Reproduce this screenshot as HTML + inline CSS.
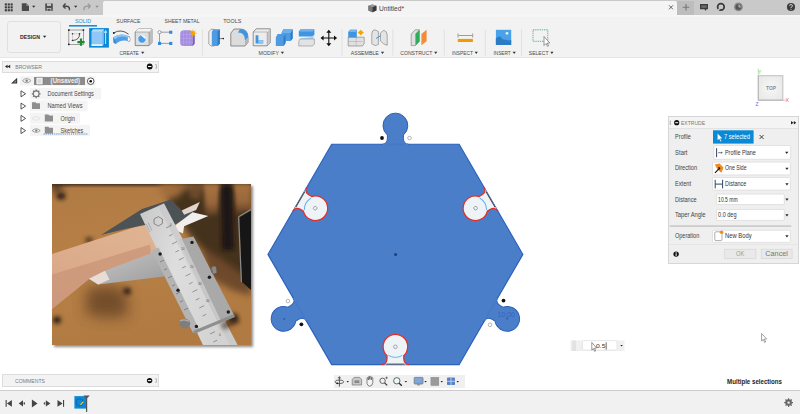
<!DOCTYPE html>
<html><head><meta charset="utf-8">
<style>
*{margin:0;padding:0;box-sizing:border-box}
html,body{width:800px;height:414px;overflow:hidden;background:#fff;font-family:"Liberation Sans",sans-serif}
.a{position:absolute}
#root{position:relative;width:800px;height:414px;overflow:hidden;background:#fff}
.t{position:absolute;white-space:nowrap;line-height:1}
</style></head><body><div id="root">

<!-- top bar -->
<div class="a" style="left:0;top:0;width:800px;height:15px;background:#c9c9c9"></div>
<div class="a" style="left:103px;top:1px;width:574px;height:14px;background:#f4f4f4;border-radius:2px 2px 0 0"></div>
<div class="a" style="left:677px;top:1px;width:17px;height:14px;background:#bdbdbd"></div>
<svg class="a" style="left:0;top:0" width="800" height="15" viewBox="0 0 800 15">
 <g fill="#3a3a3a">
  <rect x="4.8" y="3.4" width="2.1" height="2.1"/><rect x="7.7" y="3.4" width="2.1" height="2.1"/><rect x="10.6" y="3.4" width="2.1" height="2.1"/>
  <rect x="4.8" y="6.3" width="2.1" height="2.1"/><rect x="7.7" y="6.3" width="2.1" height="2.1"/><rect x="10.6" y="6.3" width="2.1" height="2.1"/>
  <rect x="4.8" y="9.2" width="2.1" height="2.1"/><rect x="7.7" y="9.2" width="2.1" height="2.1"/><rect x="10.6" y="9.2" width="2.1" height="2.1"/>
 </g>
 <path d="M21.8,3.2 H26.3 L29,5.9 V11 H21.8 Z" fill="#4a4a4a"/>
 <path d="M26.3,3.2 V5.9 H29 Z" fill="#8a8a8a"/>
 <path d="M32,5.8 H35.4 L33.7,7.8 Z" fill="#333"/>
 <path d="M45.2,3.5 H52.8 V10.8 H45.2 Z" fill="#505050"/>
 <rect x="47" y="3.5" width="4" height="2.4" fill="#c9c9c9"/>
 <rect x="46.8" y="8" width="4.4" height="2.8" fill="#c9c9c9"/>
 <rect x="47.5" y="8.8" width="3" height="2" fill="#505050"/>
 <path d="M63,6.2 L65.6,3.6 M63,6.2 L65.6,8.6 M63,6.2 H66.5 Q69.5,6.2 69.5,9.2 V10.2" stroke="#4a4a4a" stroke-width="1.4" fill="none"/>
 <path d="M74,5.8 H77.4 L75.7,7.8 Z" fill="#333"/>
 <path d="M90.5,6.2 L87.9,3.6 M90.5,6.2 L87.9,8.6 M90.5,6.2 H87 Q84,6.2 84,9.2 V10.2" stroke="#9a9a9a" stroke-width="1.3" fill="none"/>
 <path d="M95.3,5.8 H98.7 L97,7.8 Z" fill="#8a8a8a"/>
 <path d="M368.4,5.8 L372.4,4.4 L376.4,5.8 V10.6 L372.4,12.2 L368.4,10.6 Z" fill="#666"/>
 <path d="M368.4,5.8 L372.4,7.2 L376.4,5.8 L372.4,4.4 Z" fill="#9a9a9a"/>
 <path d="M372.4,7.2 V12.2 L376.4,10.6 V5.8 Z" fill="#3a3a3a"/>
 <path d="M368.4,5.8 L372.4,7.2 V12.2 L368.4,10.6 Z" fill="#7a7a7a"/>
 <path d="M669,5.3 L673,9.3 M673,5.3 L669,9.3" stroke="#555" stroke-width="0.9"/>
 <path d="M686,4 V10.6 M682.7,7.3 H689.3" stroke="#777" stroke-width="1.1"/>
 <path d="M700,4 H708 V9.2 H706.3 L706,11 L704.3,9.2 H700 Z" fill="#3d3d3d"/>
 <rect x="701.3" y="5.4" width="5.4" height="2.4" fill="#6a6a6a"/>
 <circle cx="720.9" cy="6.9" r="3.3" fill="none" stroke="#3a3a3a" stroke-width="1.7"/>
 <path d="M718,10.2 L721.6,6.4" stroke="#c9c9c9" stroke-width="1.3"/>
 <path d="M720.6,5.4 Q721.4,4.6 722.4,5.8 L721.6,6.6 Z" fill="#c9c9c9"/>
 <circle cx="738.4" cy="6.9" r="4.4" fill="#8a8a8a"/>
 <circle cx="738.4" cy="6.9" r="2.9" fill="#555"/>
 <path d="M738.4,6.9 L738.4,4.6 A2.3,2.3 0 0 1 740.4,8 Z" fill="#b0b0b0"/>
 <circle cx="791" cy="7" r="4.1" fill="#3d3d3d"/>
 <path d="M789.6,5.9 Q789.6,4.5 791,4.5 Q792.5,4.5 792.5,5.9 Q792.5,6.8 791,7.3 V8" stroke="#c9c9c9" stroke-width="1" fill="none"/>
 <circle cx="791" cy="9.3" r="0.6" fill="#c9c9c9"/>
</svg>
<svg class="a" style="left:360px;top:0" width="60" height="15" viewBox="360 0 60 15"><text x="379" y="11" font-size="7.6" fill="#444" font-family="Liberation Sans, sans-serif" textLength="25" lengthAdjust="spacingAndGlyphs">Untitled*</text></svg>

<!-- toolbar -->
<div class="a" style="left:0;top:15px;width:800px;height:43px;background:#f2f2f2;border-bottom:1px solid #e6e6e6"></div>
<div class="a" style="left:0;top:15px;width:800px;height:2px;background:#f6f6f6"></div>
<div class="a" style="left:6.6px;top:20.8px;width:54px;height:31.8px;border:1px solid #e0e0e0;border-radius:3px;background:#f2f2f2"></div>
<svg class="a" style="left:0;top:15px" width="800" height="43" viewBox="0 15 800 43" font-family="Liberation Sans, sans-serif">
 <text x="20" y="38.9" font-size="6.2" font-weight="bold" fill="#2a2a2a" textLength="20" lengthAdjust="spacingAndGlyphs">DESIGN</text>
 <path d="M42.9,35.8 H46.3 L44.6,37.8 Z" fill="#222"/>
 <g font-size="5.8" fill="#4a4a4a">
  <text x="75" y="23" fill="#1b8fd6" textLength="16" lengthAdjust="spacingAndGlyphs">SOLID</text>
  <text x="116.3" y="23.2" textLength="24.1" lengthAdjust="spacingAndGlyphs">SURFACE</text>
  <text x="164.6" y="23.2" textLength="35" lengthAdjust="spacingAndGlyphs">SHEET METAL</text>
  <text x="223.2" y="23.2" textLength="18" lengthAdjust="spacingAndGlyphs">TOOLS</text>
 </g>
 <rect x="69" y="25" width="28" height="1.6" fill="#1b8fd6"/>
 <g font-size="6" fill="#4a4a4a">
  <text x="119.6" y="55" textLength="19.2" lengthAdjust="spacingAndGlyphs">CREATE</text>
  <text x="258.6" y="55" textLength="20.5" lengthAdjust="spacingAndGlyphs">MODIFY</text>
  <text x="350.7" y="55" textLength="28.1" lengthAdjust="spacingAndGlyphs">ASSEMBLE</text>
  <text x="400.2" y="55" textLength="32.2" lengthAdjust="spacingAndGlyphs">CONSTRUCT</text>
  <text x="452" y="55" textLength="20.9" lengthAdjust="spacingAndGlyphs">INSPECT</text>
  <text x="493.4" y="55" textLength="17.4" lengthAdjust="spacingAndGlyphs">INSERT</text>
  <text x="528.8" y="55" textLength="19.7" lengthAdjust="spacingAndGlyphs">SELECT</text>
 </g>
 <g fill="#333">
  <path d="M141.10,51.8 H144.30 L142.70,53.9 Z"/>
  <path d="M280.80,51.8 H284.00 L282.40,53.9 Z"/>
  <path d="M380.90,51.8 H384.10 L382.50,53.9 Z"/>
  <path d="M434.15,51.8 H437.35 L435.75,53.9 Z"/>
  <path d="M474.65,51.8 H477.85 L476.25,53.9 Z"/>
  <path d="M512.60,51.8 H515.80 L514.20,53.9 Z"/>
  <path d="M550.30,51.8 H553.50 L551.90,53.9 Z"/>
 </g>
 <g fill="#dcdcdc">
  <rect x="202" y="29.5" width="0.8" height="26"/>
  <rect x="341.6" y="29.5" width="0.8" height="26"/>
  <rect x="392.5" y="29.5" width="0.8" height="26"/>
  <rect x="443.8" y="29.5" width="0.8" height="26"/>
  <rect x="484.85" y="29.5" width="0.8" height="26"/>
  <rect x="521.1" y="29.5" width="0.8" height="26"/>
 </g>
 <!-- sketch -->
 <g>
  <rect x="68.8" y="30" width="14.6" height="14.4" fill="none" stroke="#8a8a8a" stroke-width="0.8"/>
  <g fill="#222"><rect x="68" y="29.3" width="1.6" height="1.6"/><rect x="82.6" y="29.3" width="1.6" height="1.6"/><rect x="68" y="43.6" width="1.6" height="1.6"/></g>
  <path d="M72.5,40.5 Q79.6,40 79.6,33.8" stroke="#333" stroke-width="0.8" fill="none"/>
  <path d="M72.5,33.8 H79.6 M72.5,33.8 V40.5" stroke="#888" stroke-width="0.6" stroke-dasharray="1 0.8" fill="none"/>
  <g fill="#333"><circle cx="72.5" cy="33.8" r="0.8"/><circle cx="79.6" cy="33.8" r="0.8"/><circle cx="72.5" cy="40.5" r="0.8"/></g>
  <path d="M81,38.6 V45.8 M77.4,42.2 H84.6" stroke="#1b8a2d" stroke-width="2.2"/>
 </g>
 <!-- extrude selected -->
 <rect x="89.1" y="28.1" width="19.8" height="19.5" fill="#0a8ad6"/>
 <path d="M91.5,31.5 L93,29.6 H104 V43.8 L102.4,46 H91.5 Z" fill="#8fc8f7"/>
 <path d="M91.5,31.5 L93,29.6 H104 L102.4,31.5 Z" fill="#b9defb"/>
 <path d="M102.4,31.5 L104,29.6 V43.8 L102.4,46 Z" fill="#6fb2ec"/>
 <path d="M91.5,44.2 H102.4 V46 H91.5 Z" fill="#e8f2fa"/>
 <path d="M105.6,44 V31.5 M104.4,32.8 L105.6,30.5 L106.8,32.8" stroke="#fff" stroke-width="0.8" fill="none"/>
 <!-- revolve -->
 <path d="M113.6,33 Q121,28.4 128.6,34.2" stroke="#444" stroke-width="0.9" fill="none"/>
 <circle cx="113.8" cy="33" r="0.9" fill="#111"/>
 <path d="M113,37.5 Q120.5,31.8 129.5,36.5 L130,41.5 Q121.5,38.5 116,43.8 Z" fill="#4f9fe6"/>
 <path d="M113,37.5 Q120.5,31.8 129.5,36.5 L128,38 Q120.5,34.5 114.6,39.4 Z" fill="#8cc4f2"/>
 <path d="M113,37.5 L114.6,39.4 L116.3,44.2 L113.6,42.8 Z" fill="#2f7fc9"/>
 <ellipse cx="128.8" cy="39.2" rx="1.4" ry="2.4" fill="#fff" stroke="#555" stroke-width="0.4"/>
 <!-- hole -->
 <path d="M135.2,32 L138.2,29 H152 V42.6 L149,45.6 H135.2 Z" fill="#dedede" stroke="#666" stroke-width="0.7"/>
 <path d="M135.2,32 L138.2,29 H152 L149,32 Z" fill="#f4f4f4"/>
 <path d="M149,32 L152,29 V42.6 L149,45.6 Z" fill="#bdbdbd"/>
 <path d="M135.2,32 H149 V45.6" stroke="#777" stroke-width="0.5" fill="none"/>
 <circle cx="142" cy="39" r="4.2" fill="#4c9be3" stroke="#fff" stroke-width="0.7"/>
 <path d="M140.8,35.2 A4,4 0 0 1 145.8,39.6 Z" fill="#fff"/>
 <!-- pattern -->
 <path d="M159.5,32.2 H170.8 M159.5,32.2 V43.4 H170.8" stroke="#888" stroke-width="0.8" fill="none"/>
 <circle cx="159.5" cy="32.2" r="1.6" fill="#fff" stroke="#666" stroke-width="0.6"/>
 <g fill="#2d8ae0"><rect x="169.2" y="30.7" width="3.1" height="3.1"/><rect x="158" y="41.9" width="3.1" height="3.1"/><rect x="169.2" y="41.9" width="3.1" height="3.1"/></g>
 <!-- form -->
 <path d="M180.2,34 Q180.2,30.2 184,30.2 H189 Q192.5,30.2 192.5,33.5 V43.5 Q192.5,46 189.5,46 H183.5 Q180.2,46 180.2,42.5 Z" fill="#a58ce0"/>
 <path d="M189.8,31.5 Q194.8,32 194.8,36.5 V42.5 Q194.8,45.6 191,46 H189.5 Q192.5,46 192.5,43.5 V33.5 Q192.5,31.8 189.8,31.5 Z" fill="#7a5ec4"/>
 <path d="M183.6,30.4 V46 M186.8,30.2 V46 M189.8,30.6 V46 M180.2,34.5 H192.5 M180.2,38.3 H192.5 M180.2,42.1 H192.5" stroke="#c3b2ee" stroke-width="0.4"/>
 <circle cx="192.9" cy="33.2" r="2.2" fill="#f5a300"/>
 <path d="M192.9,29.4 V37 M189.1,33.2 H196.7 M190.2,30.5 L195.6,35.9 M190.2,35.9 L195.6,30.5" stroke="#f5a300" stroke-width="0.7"/>
 <!-- press pull -->
 <path d="M208.8,31.8 L211,29.3 H214.2 V46 H211 L208.8,44 Z" fill="#eee" stroke="#777" stroke-width="0.6"/>
 <path d="M211.8,31.8 L213.6,29.3 H219.8 V43.6 L217.6,46 H211.8 Z" fill="#4c9be3"/>
 <path d="M217.6,31.8 L219.8,29.3 V43.6 L217.6,46 Z" fill="#2f78c4"/>
 <path d="M219.5,38.6 H222.6" stroke="#222" stroke-width="0.6"/>
 <circle cx="223.2" cy="38.6" r="0.8" fill="#111"/>
 <!-- fillet -->
 <path d="M230.8,33.2 L234,29 H240 Q248,29 248,37.5 V42.4 L245,46 H230.8 Z" fill="#dcdcdc" stroke="#666" stroke-width="0.7"/>
 <path d="M240,29 Q248,29 248,37.5 L245,40.5 Q245,32.5 238,32.5 Z" fill="#3f95e0"/>
 <path d="M245,40.5 V46 L248,42.4 V37.5 Z" fill="#b5b5b5"/>
 <!-- shell -->
 <path d="M253.2,32 L256.3,28.8 H270.3 V42.8 L267.2,45.8 H253.2 Z" fill="#ececec" stroke="#666" stroke-width="0.7"/>
 <path d="M267.2,32 L270.3,28.8 V42.8 L267.2,45.8 Z" fill="#c4c4c4"/>
 <path d="M253.2,32 H267.2 V45.8" stroke="#888" stroke-width="0.5" fill="none"/>
 <path d="M255.6,35.3 H258.4 V40.2 H263.2 V43.4 H255.6 Z" fill="#3f95e0"/>
 <path d="M258.4,40.2 H263.2 V43.4 H258.4 Z" fill="#8dc5f3"/>
 <!-- combine -->
 <path d="M281.5,33 L283.3,29.3 H292.6 V38.5 L290.6,41 H281.5 Z" fill="#4c9be3"/>
 <path d="M275.8,37.6 L277.6,34 H285.5 V43 L283.6,46 H275.8 Z" fill="#4c9be3"/>
 <path d="M290.6,33 L292.6,29.3 V38.5 L290.6,41 Z" fill="#2f78c4"/>
 <path d="M283.6,37.6 L285.5,34 V43 L283.6,46 Z" fill="#2f78c4"/>
 <path d="M281.5,33 L283.3,29.3 H292.6 L290.6,33 Z" fill="#6db0ee"/>
 <!-- split body -->
 <path d="M298.8,31.5 L300.5,29.3 H314.4 V34.5 L312.6,36.6 H298.8 Z" fill="#3f95e0"/>
 <path d="M298.8,31.5 L300.5,29.3 H314.4 L312.6,31.5 Z" fill="#71b4ef"/>
 <path d="M298.5,38.8 L314.4,36.4 L313,39 L298.5,39.4 Z" fill="#a8d4f5"/>
 <path d="M298.8,41 L300.5,39 H314.4 V44 L312.6,46 H298.8 Z" fill="#e3e3e3" stroke="#777" stroke-width="0.5"/>
 <!-- move -->
 <path d="M328.8,31 V45 M321.5,38 H336.3" stroke="#111" stroke-width="1.1"/>
 <path d="M328.8,29.8 L326.3,32.8 H331.3 Z M328.8,46.2 L326.3,43.2 H331.3 Z M320.6,38 L323.6,35.5 V40.5 Z M337,38 L334,35.5 V40.5 Z" fill="#111"/>
 <!-- new component -->
 <path d="M348.2,37.2 H364.2 V43.6 L362.4,46 H348.2 Z" fill="#e0e0e0" stroke="#777" stroke-width="0.6"/>
 <path d="M356.2,37.2 V46 M348.2,41.5 H362.4" stroke="#999" stroke-width="0.4"/>
 <path d="M348.2,32 L350,29.8 H356.8 V37.6 H348.2 Z" fill="#3f95e0"/>
 <path d="M348.2,32 L350,29.8 H356.8 L355.5,32 Z" fill="#76b6ef"/>
 <path d="M360.8,29.4 L361.8,31.6 L364.2,32.6 L361.8,33.6 L360.8,35.8 L359.8,33.6 L357.4,32.6 L359.8,31.6 Z" fill="#f5a300"/>
 <circle cx="360.8" cy="32.6" r="2.1" fill="#f5a300"/>
 <!-- joint -->
 <path d="M371.8,33.5 Q372,30 375,29.8 L378.4,31.5 V44.5 L375.2,45.6 L371.8,43.8 Z" fill="#e4e4e4" stroke="#777" stroke-width="0.6"/>
 <path d="M380.4,33 L383.8,30.3 Q387,31 387.2,35 V45.3 L383.6,43.8 L380.4,41 Z" fill="#e4e4e4" stroke="#777" stroke-width="0.6"/>
 <path d="M376,38.5 L381,35.5" stroke="#3f95e0" stroke-width="1"/>
 <!-- construct -->
 <path d="M411.2,34.2 L415.2,29.8 H419.4 V41.6 L415.4,45.6 H411.2 Z" fill="#e0e0e0" stroke="#777" stroke-width="0.6"/>
 <path d="M415,34.2 L419.4,29.8 V41.6 L415.4,45.6 V34.2 Z" fill="#2eae5b"/>
 <path d="M421.4,34 L426.6,29.8 V41.2 L421.4,45.2 Z" fill="#f08c3a"/>
 <!-- measure -->
 <path d="M458,33.5 V37.5 M472.7,33.5 V37.5" stroke="#777" stroke-width="0.7"/>
 <path d="M458.6,35.5 H472.1" stroke="#777" stroke-width="0.7"/>
 <rect x="457.8" y="38.9" width="15.1" height="3.1" fill="#f29a00"/>
 <!-- insert -->
 <rect x="495.9" y="29.8" width="15.3" height="15.1" fill="#4aa3ea"/>
 <path d="M495.9,41 Q498.5,36 501,38 Q503.5,40.5 506,39.5 Q508,41 511.2,40 V44.9 H495.9 Z" fill="#2b7cc4"/>
 <path d="M495.9,38.5 Q499,35 501.5,37.6 L495.9,42 Z" fill="#2b7cc4"/>
 <circle cx="507" cy="33.3" r="1.4" fill="#f5f0c0"/>
 <!-- select -->
 <rect x="533" y="29.8" width="14.8" height="11.5" fill="none" stroke="#39a563" stroke-width="0.8" stroke-dasharray="1.3 0.9"/>
 <path d="M544,36.5 V45.5 L546,43.5 L547.6,46.4 L548.6,45.8 L547.2,43.1 L549.8,43 Z" fill="#fff" stroke="#555" stroke-width="0.6"/>
</svg>

<!-- browser header -->
<div class="a" style="left:2px;top:60.5px;width:156.5px;height:12.5px;background:#f3f3f3;border:1px solid #dddddd"></div>
<svg class="a" style="left:0;top:56px" width="170" height="84" viewBox="0 56 170 84" font-family="Liberation Sans, sans-serif">
 <path d="M5,66.5 L7.6,64.8 V68.2 Z M7.6,66.5 L10.2,64.8 V68.2 Z" fill="#222"/>
 <text x="15.2" y="68.7" font-size="6.2" fill="#7a7a7a" textLength="26.7" lengthAdjust="spacingAndGlyphs">BROWSER</text>
 <circle cx="149.7" cy="66.5" r="2.9" fill="#111"/>
 <rect x="148" y="66" width="3.4" height="1" fill="#fff"/>
 <path d="M155.8,64 Q157.4,66.5 155.8,69" stroke="#aaa" stroke-width="1" fill="none"/>
 <!-- row1 -->
 <rect x="20" y="76.2" width="75.5" height="9.4" fill="#f3f3f3"/>
 <path d="M11,83.5 L17.2,77.7 V83.5 Z" fill="#333"/>
 <path d="M13.5,82.5 L16.2,80 V82.5 Z" fill="#f3f3f3" opacity="0.5"/>
 <path d="M22.4,80.7 Q26.7,76.4 31,80.7 Q26.7,85 22.4,80.7 Z" fill="none" stroke="#999" stroke-width="0.9"/>
 <circle cx="26.7" cy="80.7" r="1.3" fill="#888"/>
 <rect x="34" y="77" width="51" height="8" fill="#8c8c8c"/>
 <path d="M36,78.6 Q36,77.3 37.3,77.3 H42.2 Q43,77.3 43,78.3 V83.8 Q43,84.8 42,84.8 H37.3 Q36,84.8 36,83.5 Z" fill="#f2f2f2" stroke="#666" stroke-width="0.5"/>
 <rect x="37.6" y="78.8" width="3.8" height="4.6" fill="#dcdcdc"/>
 <text x="50.6" y="83.4" font-size="6.3" font-weight="bold" fill="#f0f0f0" textLength="29.5" lengthAdjust="spacingAndGlyphs">(Unsaved)</text>
 <circle cx="90.7" cy="81.2" r="3.3" fill="#fff" stroke="#333" stroke-width="0.8"/>
 <circle cx="90.7" cy="81.2" r="1.3" fill="#111"/>
 <!-- row2 -->
 <rect x="30" y="88" width="71" height="11.4" fill="#f4f4f4"/>
 <path d="M21,90.8 L25.6,93.8 L21,96.8 Z" fill="#fff" stroke="#444" stroke-width="0.9" stroke-linejoin="round"/>
 <g transform="translate(36.2,93.8)">
  <circle r="2.9" fill="none" stroke="#777" stroke-width="1.1"/>
  <path d="M0,-4.4 V-2.6 M0,2.6 V4.4 M-4.4,0 H-2.6 M2.6,0 H4.4 M-3.1,-3.1 L-1.9,-1.9 M1.9,1.9 L3.1,3.1 M-3.1,3.1 L-1.9,1.9 M1.9,-1.9 L3.1,-3.1" stroke="#777" stroke-width="1.3"/>
 </g>
 <text x="47.5" y="95.8" font-size="6.3" fill="#484848" textLength="46.3" lengthAdjust="spacingAndGlyphs">Document Settings</text>
 <!-- row3 -->
 <rect x="30" y="100.4" width="57.5" height="11" fill="#f4f4f4"/>
 <path d="M21,103.1 L25.6,106.1 L21,109.1 Z" fill="#fff" stroke="#444" stroke-width="0.9" stroke-linejoin="round"/>
 <path d="M32,102.2 H35.6 L36.4,103.2 H40 V109 H32 Z" fill="#8e8e8e"/>
 <text x="47.5" y="108.1" font-size="6.3" fill="#484848" textLength="35" lengthAdjust="spacingAndGlyphs">Named Views</text>
 <!-- row4 -->
 <rect x="30" y="112.6" width="50" height="11.2" fill="#f4f4f4"/>
 <path d="M21,115.4 L25.6,118.4 L21,121.4 Z" fill="#fff" stroke="#444" stroke-width="0.9" stroke-linejoin="round"/>
 <path d="M32.2,118.4 Q36.2,114.8 40.2,118.4 Q36.2,122 32.2,118.4 Z" fill="none" stroke="#ddd" stroke-width="0.8"/>
 <path d="M44.8,114.6 H48.4 L49.2,115.6 H53 V121.4 H44.8 Z" fill="#8e8e8e"/>
 <text x="60.6" y="120.5" font-size="6.3" fill="#484848" textLength="14.4" lengthAdjust="spacingAndGlyphs">Origin</text>
 <!-- row5 -->
 <rect x="30" y="124.8" width="60" height="11.2" fill="#f4f4f4"/>
 <path d="M21,127.6 L25.6,130.6 L21,133.6 Z" fill="#fff" stroke="#444" stroke-width="0.9" stroke-linejoin="round"/>
 <path d="M32.2,130.6 Q36.2,127 40.2,130.6 Q36.2,134.2 32.2,130.6 Z" fill="none" stroke="#888" stroke-width="0.8"/>
 <circle cx="36.2" cy="130.6" r="1.2" fill="#888"/>
 <path d="M44.8,126.8 H48.4 L49.2,127.8 H53 V133.6 H44.8 Z" fill="#8e8e8e"/>
 <text x="60.6" y="132.7" font-size="6.3" fill="#484848" textLength="22.8" lengthAdjust="spacingAndGlyphs">Sketches</text>
 <path d="M43.6,134 H88" stroke="#4a78c0" stroke-width="0.9" stroke-dasharray="1.2 0.9"/>
</svg>

<!-- photo -->
<div class="a" style="left:52px;top:184px;width:199px;height:161px;background:#b57a3e;box-shadow:1.5px 2px 2.5px rgba(0,0,0,.45)"></div>
<svg class="a" style="left:52px;top:184px" width="199" height="161" viewBox="52 184 199 161">
 <defs>
  <filter id="b1" x="-50%" y="-50%" width="200%" height="200%"><feGaussianBlur stdDeviation="0.45"/></filter>
  <filter id="b2" x="-50%" y="-50%" width="200%" height="200%"><feGaussianBlur stdDeviation="2"/></filter>
  <filter id="b3" x="-50%" y="-50%" width="200%" height="200%"><feGaussianBlur stdDeviation="3.5"/></filter>
  <filter id="b6" x="-50%" y="-50%" width="200%" height="200%"><feGaussianBlur stdDeviation="7"/></filter>
  <linearGradient id="wood" x1="0" y1="0" x2="0.3" y2="1">
   <stop offset="0" stop-color="#b07a44"/><stop offset="0.5" stop-color="#b68046"/><stop offset="1" stop-color="#b07a42"/>
  </linearGradient>
  <linearGradient id="board" x1="0" y1="1" x2="0.4" y2="0">
   <stop offset="0" stop-color="#d4a284"/><stop offset="0.5" stop-color="#dbab8c"/><stop offset="1" stop-color="#dfb392"/>
  </linearGradient>
  <linearGradient id="beam" x1="0" y1="0" x2="1" y2="0.3">
   <stop offset="0" stop-color="#c8c8c8"/><stop offset="0.45" stop-color="#dedede"/><stop offset="1" stop-color="#d2d2d2"/>
  </linearGradient>
  <linearGradient id="topshade" x1="0" y1="0" x2="0" y2="1">
   <stop offset="0" stop-color="#3a2818" stop-opacity="0.85"/><stop offset="1" stop-color="#3a2818" stop-opacity="0"/>
  </linearGradient>
  <linearGradient id="streak" x1="0" y1="0" x2="0" y2="1">
   <stop offset="0" stop-color="#a87442"/><stop offset="0.6" stop-color="#98663a"/><stop offset="1" stop-color="#5a3e28"/>
  </linearGradient>
  <linearGradient id="jaw" x1="0" y1="0" x2="1" y2="1">
   <stop offset="0" stop-color="#c8c8c8"/><stop offset="1" stop-color="#9c9c9c"/>
  </linearGradient>
 </defs>
 <rect x="52" y="184" width="199" height="161" fill="url(#wood)"/>
 <rect x="52" y="184" width="199" height="4" fill="url(#topshade)"/>
 <!-- dark background regions -->
 <g filter="url(#b3)">
  <path d="M168,200 L176,186 H251 V280 L238,272 L218,258 L198,246 L186,230 L176,214 Z" fill="#45301f"/>
  <path d="M200,246 L218,258 L238,272 L251,280 V296 L232,290 L210,278 Z" fill="#6e4a2a"/>
  <path d="M52,184 H66 L58,192 H52 Z" fill="#3a2a1c"/>
 </g>
 <path d="M203,184 H220 L218,214 L206,216 Z" fill="url(#streak)" filter="url(#b2)"/>
 <path d="M233,184 H251 V210 L236,214 Z" fill="url(#streak)" filter="url(#b2)"/>
 <path d="M188,184 H203 L200,200 L190,198 Z" fill="#7a5230" opacity="0.7" filter="url(#b2)"/>
 <path d="M221,184 H232 L234,250 L222,250 Z" fill="#1e1814" filter="url(#b2)"/>
 <path d="M160,184 H190 L176,198 L160,194 Z" fill="#a06c3a" filter="url(#b3)"/>
 <path d="M239.5,217.5 L251,210.5 V290 L242,282 Z" fill="#151517" filter="url(#b1)"/>
 <path d="M238.6,216.8 L251,209.5 M238.6,216.8 L241.4,282" stroke="#8a8a8a" stroke-width="1.2" fill="none" filter="url(#b1)"/>
 <!-- holes -->
 <g fill="#2a1e14" filter="url(#b2)">
  <ellipse cx="61" cy="196" rx="4.5" ry="3.5"/>
  <ellipse cx="57" cy="320" rx="4" ry="3.5"/>
  <ellipse cx="127" cy="291.3" rx="4" ry="3.5"/>
  <ellipse cx="233" cy="318" rx="5" ry="4.5"/>
 </g>
 <ellipse cx="89" cy="240" rx="4" ry="3" fill="#5a3a20" filter="url(#b2)"/>
 <path d="M86,290 Q105,282 126,290 L128,316 Q104,320 86,314 Z" fill="#5e3c20" opacity="0.75" filter="url(#b6)"/>
 <!-- board -->
 <path d="M52,254 L157,220 L162,232 L165,250 L150,262 L89,279 L52,309 Z" fill="url(#board)" filter="url(#b1)"/>
 <path d="M52,274.5 L150,244.5 L152,262 L89,279 L52,309 Z" fill="#cc977a" opacity="0.8" filter="url(#b1)"/>
 <!-- upper jaw dark -->
 <path d="M101,235 L142,209 L171,199.5 L182,211 L195,212 L176,224 L150,224 L125,229 Z" fill="#4c5257" filter="url(#b1)"/>
 <path d="M181.7,210.5 L199.8,202 L196.2,209.9 L184.1,214.7 Z" fill="#e2d4cc"/>
 <path d="M175.7,225 L192.6,212.3 L208.3,216 L184.1,226.2 L183,233.5 L174.5,229.8 Z" fill="#f2eeec"/>
 <!-- lower jaw -->
 <path d="M89,278.7 L105,270.7 L160,250 L168,262 L164,276.4 L98.2,284.4 Z" fill="url(#jaw)" filter="url(#b1)"/>
 <path d="M89,278.7 L105,270.7 L109.5,279.6 L98.2,284.4 Z" fill="#e8dcd6"/>
 <!-- beam -->
 <path d="M140,214 L164,203.5 L237.5,345 H203 Z" fill="url(#beam)" filter="url(#b1)"/>
 <path d="M158,206 L164,203.5 L237.5,345 H230 Z" fill="#c4c4c4" opacity="0.6"/>
 <!-- slider -->
 <path d="M236,316 L220,324 L224,330 L240,322 Z" fill="#3a2818" opacity="0.6" filter="url(#b2)"/>
 <path d="M179,239.5 L193.5,236.6 L234,314.9 L218,322 Z" fill="#a9a9a9" filter="url(#b1)"/>
 <path d="M179,239.5 L182,239 L221,321 L218,322 Z" fill="#cfcfcf" opacity="0.8"/>
 <path d="M151.5,250.5 L158.5,247.5 L199.5,330 L193,333 Z" fill="#b4b4b4" filter="url(#b1)"/>
 <path d="M193,331 L234,314 L235,317 L194,334 Z" fill="#8e8e8e"/>
 <g fill="#1c1c1c">
  <circle cx="192" cy="242.4" r="1.7"/>
  <circle cx="209.4" cy="277.2" r="1.7"/>
  <circle cx="228.3" cy="312" r="1.7"/>
  <circle cx="160.1" cy="254" r="1.7"/>
  <circle cx="178" cy="290.2" r="1.7"/>
  <circle cx="196.4" cy="326.4" r="1.7"/>
 </g>
 <ellipse cx="213.8" cy="270" rx="3" ry="3.8" fill="#6a6a6a" filter="url(#b1)"/>
 <path d="M212,267 L215.5,266.5 L216.5,273 L213,273.5 Z" fill="#8a8a8a"/>
 <ellipse cx="184.8" cy="323.6" rx="5.5" ry="4.8" fill="#7e7e7e" filter="url(#b1)"/>
 <path d="M180,321 Q184.5,318.5 189,321.5" stroke="#b0b0b0" stroke-width="1.2" fill="none"/>
 <!-- scale ticks -->
 <g stroke="#5a5a5a" stroke-width="0.55">
  <path d="M166,228 L171,225.6 M169,236 L172.5,234.3 M172,244 L177,241.6 M175.4,252 L179,250.3 M178.8,260 L183.8,257.6 M182.2,268 L185.8,266.3 M185.6,276 L190.6,273.6 M189,284 L192.6,282.3 M192.4,292 L197.4,289.6 M195.8,300 L199.4,298.3 M199.2,308 L204.2,305.6 M202.6,316 L206.2,314.3"/>
  <path d="M210,334 L215,331.6 M213.4,342 L217,340.3"/>
  <path d="M160,262 L164,260.2 M164,270 L167,268.6 M168,278 L172,276.2 M172,286 L175,284.6 M176,294 L180,292.2 M180,302 L183,300.6 M184,310 L188,308.2"/>
 </g>
 <g fill="#555" font-family="Liberation Sans, sans-serif" font-size="3.2">
  <text x="170" y="226">0</text><text x="181" y="250">10</text><text x="190" y="268">20</text><text x="198" y="285">30</text><text x="206" y="302">40</text><text x="219" y="336">0</text>
 </g>
 <path d="M154,219 L158.2,216.6 L162.4,219 V223.6 L158.2,226 L154,223.6 Z" fill="none" stroke="#555" stroke-width="0.6"/>
 <path d="M146,224 L150,232 M148,222.5 L152,230.5" stroke="#888" stroke-width="0.5"/>
</svg>

<!-- hexagon -->
<svg class="a" style="left:0;top:0" width="800" height="414" viewBox="0 0 800 414">
<defs>
 <g id="cut">
  <path d="M-14,0 Q-8.4,0 -8.4,-6 L-8.4,-9 A12.3,12.3 0 1 1 8.4,-9 L8.4,-6 Q8.4,0 14,0" transform="scale(1,-1)" fill="#eef3f8" stroke="#e0302a" stroke-width="1.3"/>
  <path d="M-9,0.5 H9" stroke="#3a3a3a" stroke-width="0.9"/>
  <path d="M-7,9.2 Q0,5.2 7,9.2" stroke="#5aaee0" stroke-width="0.9" fill="none"/>
  <circle cx="0" cy="17.8" r="1.8" fill="none" stroke="#888" stroke-width="0.7"/>
 </g>
 <g id="bump">
  <path d="M-14,0.5 Q-8,0 -8,-6 L-8,-9.2 A12.4,12.4 0 1 1 8,-9.2 L8,-6 Q8,0 14,0.5 Z" fill="#4b7ec9" stroke="#2b60bd" stroke-width="1"/>
  <rect x="-13" y="-0.5" width="26" height="2" fill="#4b7ec9"/>
  <path d="M-9,0 H9" stroke="#3d72c4" stroke-width="0.6"/>
 </g>
</defs>
<polygon points="331.65,144.2 459.15,144.2 522.9,254.4 459.15,364.6 331.65,364.6 267.9,254.4" fill="#4b7ec9" stroke="#2b60bd" stroke-width="1.1"/>
<use href="#bump" transform="translate(395.4,144.2) rotate(0)"/>
<use href="#bump" transform="translate(491.0,309.5) rotate(120)"/>
<use href="#bump" transform="translate(299.8,309.5) rotate(-120)"/>
<use href="#cut" transform="translate(395.4,364.6) rotate(180)"/>
<use href="#cut" transform="translate(299.8,199.3) rotate(-60)"/>
<use href="#cut" transform="translate(491.0,199.3) rotate(60)"/>
<circle cx="395.6" cy="254.5" r="1.5" fill="#1d3f7a"/>
<g stroke="#888" stroke-width="0.6">
 <circle cx="382" cy="138" r="1.9" fill="#111" stroke="none"/>
 <circle cx="409.5" cy="138" r="1.8" fill="#fff"/>
 <circle cx="287.9" cy="301" r="1.8" fill="#fff"/>
 <circle cx="301.4" cy="324.3" r="1.9" fill="#111" stroke="none"/>
 <circle cx="503.5" cy="300.6" r="1.9" fill="#111" stroke="none"/>
 <circle cx="490" cy="324.8" r="1.8" fill="#fff"/>
</g>
<text x="497.6" y="316.8" font-size="7.5" fill="#3566b6" font-family="Liberation Sans, sans-serif" textLength="17.4" lengthAdjust="spacingAndGlyphs">10.00</text>
<circle cx="507.2" cy="318.4" r="1" fill="#2a5aa8"/>
<circle cx="284.2" cy="318.9" r="0.9" fill="#2a5aa8"/>
<!-- input widget -->
<rect x="570.5" y="340.5" width="54" height="10.5" fill="#f0f0f0"/>
<rect x="572" y="340.5" width="4" height="10.5" fill="#e2e2e2"/>
<rect x="582.5" y="340.6" width="34.5" height="9.4" rx="0.8" fill="#fff" stroke="#dadada" stroke-width="0.6"/>
<text x="596" y="348.2" font-size="6" fill="#333" font-family="Liberation Sans, sans-serif" textLength="9.4" lengthAdjust="spacingAndGlyphs">0.5</text>
<path d="M606.2,342.2 V349.6" stroke="#111" stroke-width="0.6"/>
<path d="M620.3,345 H622.8 L621.55,346.6 Z" fill="#222"/>
<path d="M591.8,342.4 V350 L593.4,348.6 L594.6,351.4 L595.6,350.9 L594.5,348.2 L596.6,348 Z" fill="#fff" stroke="#444" stroke-width="0.55"/>
<path d="M761.6,333.6 V341 L763.3,339.5 L764.6,342.4 L765.6,341.9 L764.4,339.1 L766.6,338.9 Z" fill="#fff" stroke="#444" stroke-width="0.5"/>
</svg>

<!-- extrude panel -->
<div class="a" style="left:668px;top:116px;width:131px;height:147.5px;background:#efefef;border:1px solid #d6d6d6"></div>
<div class="a" style="left:669px;top:117px;width:129px;height:11.5px;background:#f4f4f4;border-bottom:1px solid #e2e2e2"></div>
<svg class="a" style="left:660px;top:110px" width="140" height="160" viewBox="660 110 140 160" font-family="Liberation Sans, sans-serif">
 <path d="M670.5,120.5 Q669.6,122.7 670.5,125" stroke="#999" stroke-width="0.8" fill="none"/>
 <circle cx="676.7" cy="122.7" r="2.6" fill="#111"/>
 <rect x="675.2" y="122.2" width="3" height="1" fill="#fff"/>
 <text x="681" y="125" font-size="6.2" fill="#777" textLength="24" lengthAdjust="spacingAndGlyphs">EXTRUDE</text>
 <path d="M791,121 L793.5,122.8 L791,124.6 Z M793.8,121 L796.3,122.8 L793.8,124.6 Z" fill="#222"/>
 <g font-size="6.3" fill="#444">
  <text x="675.1" y="139.3" textLength="15.7" lengthAdjust="spacingAndGlyphs">Profile</text>
  <text x="675.1" y="154.6" textLength="12.4" lengthAdjust="spacingAndGlyphs">Start</text>
  <text x="674.9" y="170.4" textLength="22.2" lengthAdjust="spacingAndGlyphs">Direction</text>
  <text x="674.9" y="186" textLength="16.2" lengthAdjust="spacingAndGlyphs">Extent</text>
  <text x="674.9" y="201.5" textLength="21.7" lengthAdjust="spacingAndGlyphs">Distance</text>
  <text x="674.9" y="217.2" textLength="30.7" lengthAdjust="spacingAndGlyphs">Taper Angle</text>
  <text x="674.9" y="238.2" textLength="24.4" lengthAdjust="spacingAndGlyphs">Operation</text>
 </g>
 <!-- profile button -->
 <rect x="713" y="130.3" width="40.6" height="13.3" fill="#0a8ad6"/>
 <path d="M717.4,133.2 V140.6 L719.2,139 L720.6,141.8 L721.6,141.3 L720.3,138.6 L722.6,138.4 Z" fill="#fff" stroke="#0a6fb0" stroke-width="0.3"/>
 <text x="723.9" y="139.3" font-size="6.3" fill="#fff" textLength="26.1" lengthAdjust="spacingAndGlyphs">7 selected</text>
 <path d="M759.6,135 L763.6,139 M763.6,135 L759.6,139" stroke="#333" stroke-width="0.9"/>
 <!-- dropdowns -->
 <g fill="#fff" stroke="#d8d8d8" stroke-width="0.7">
  <rect x="713.8" y="145.5" width="76.8" height="13.8" rx="1"/>
  <rect x="712.5" y="162.1" width="77.9" height="12.8" rx="1"/>
  <rect x="712.5" y="177.5" width="77.9" height="12.6" rx="1"/>
  <rect x="716.4" y="194.1" width="67.9" height="10.5" rx="0.8"/>
  <rect x="716.4" y="209.5" width="67.9" height="10.9" rx="0.8"/>
  <rect x="712.5" y="230.2" width="77.9" height="12.2" rx="1"/>
 </g>
 <g fill="#222">
  <path d="M785.15,151.8 H788.35 L786.75,154.0 Z"/>
  <path d="M785.35,167.8 H788.55 L786.95,170.0 Z"/>
  <path d="M785.35,183.2 H788.55 L786.95,185.4 Z"/>
  <path d="M785.35,198.6 H788.55 L786.95,200.8 Z"/>
  <path d="M785.35,214.3 H788.55 L786.95,216.5 Z"/>
  <path d="M785.35,235.3 H788.55 L786.95,237.5 Z"/>
 </g>
 <g font-size="6.3" fill="#333">
  <text x="725" y="154.6" textLength="30.8" lengthAdjust="spacingAndGlyphs">Profile Plane</text>
  <text x="725.1" y="170.4" textLength="21.5" lengthAdjust="spacingAndGlyphs">One Side</text>
  <text x="725.1" y="186" textLength="21.3" lengthAdjust="spacingAndGlyphs">Distance</text>
  <text x="718.1" y="201.6" textLength="19.5" lengthAdjust="spacingAndGlyphs">10.5 mm</text>
  <text x="718.1" y="217.2" textLength="18.4" lengthAdjust="spacingAndGlyphs">0.0 deg</text>
  <text x="725.1" y="238.3" textLength="26.5" lengthAdjust="spacingAndGlyphs">New Body</text>
 </g>
 <!-- icons -->
 <path d="M716.6,148.2 V157.2" stroke="#334466" stroke-width="1"/>
 <path d="M718.2,152.7 H721.4" stroke="#222" stroke-width="0.6"/>
 <path d="M721.4,151.6 L722.6,152.7 L721.4,153.8 Z" fill="#222"/>
 <path d="M714.8,164.5 L719.5,163.6 L723.5,167.5 L721.5,172.8 L717.5,169.5 Z" fill="#f08a24"/>
 <path d="M715,172.8 L719.8,167.8" stroke="#111" stroke-width="1.1"/>
 <path d="M719.8,167.8 L718.2,167.4 M719.8,167.8 L719.6,169.4" stroke="#111" stroke-width="0.8"/>
 <path d="M715.2,179.8 V188.4 M722.6,179.8 V188.4 M715.2,184.1 H722.6" stroke="#334466" stroke-width="1"/>
 <rect x="714.8" y="231.8" width="7.2" height="8.8" rx="1.2" fill="#fff" stroke="#777" stroke-width="0.6"/>
 <circle cx="721.6" cy="232.2" r="1.8" fill="#f08a24"/>
 <!-- separators -->
 <rect x="669.6" y="225.3" width="121.7" height="1.6" fill="#c9c9c9"/>
 <rect x="669" y="244.3" width="129" height="0.6" fill="#dedede"/>
 <!-- footer -->
 <circle cx="676.1" cy="254.1" r="2.7" fill="#111"/>
 <rect x="675.6" y="253.3" width="1" height="2.6" fill="#fff"/>
 <circle cx="676.1" cy="252.4" r="0.5" fill="#fff"/>
 <rect x="724.4" y="249.2" width="31.5" height="9.3" fill="#e9e9e9" stroke="#d2d2d2" stroke-width="0.6"/>
 <rect x="761.2" y="249.2" width="30.9" height="9.3" fill="#e9e9e9" stroke="#d2d2d2" stroke-width="0.6"/>
 <text x="736" y="256.3" font-size="6.3" fill="#9a9a9a" textLength="8.3" lengthAdjust="spacingAndGlyphs">OK</text>
 <text x="765.3" y="256.3" font-size="6.3" fill="#777" textLength="22.7" lengthAdjust="spacingAndGlyphs">Cancel</text>
</svg>

<!-- view cube -->
<svg class="a" style="left:745px;top:65px" width="50" height="45" viewBox="745 65 50 45" font-family="Liberation Sans, sans-serif">
 <defs><radialGradient id="vc" cx="0.5" cy="0.5" r="0.7"><stop offset="0" stop-color="#f7f7f7"/><stop offset="1" stop-color="#e6e6e6"/></radialGradient></defs>
 <rect x="758.3" y="75.7" width="24.5" height="24.5" fill="url(#vc)" stroke="#c4c4c4" stroke-width="1.1"/>
 <path d="M758.3,75.7 V100.2 H782.8" stroke="#b8b8b8" stroke-width="1" fill="none"/>
 <text x="766" y="90.2" font-size="5.8" font-weight="bold" fill="#8c8c8c" textLength="10" lengthAdjust="spacingAndGlyphs">TOP</text>
 <path d="M758.3,75.5 V68.5" stroke="#7fd07f" stroke-width="0.5"/>
 <text x="758" y="74" font-size="5" fill="#60c060">Y</text>
 <path d="M783,100.2 H788" stroke="#f08080" stroke-width="0.5"/>
 <text x="785.5" y="101.6" font-size="5.2" fill="#f07070">X</text>
 <text x="755.5" y="105.5" font-size="5" fill="#6a6ae0">Z</text>
</svg>

<!-- comments -->
<div class="a" style="left:2px;top:374px;width:156.5px;height:12.6px;background:#f3f3f3;border:1px solid #dddddd"></div>
<svg class="a" style="left:0;top:370px" width="170" height="44" viewBox="0 370 170 44" font-family="Liberation Sans, sans-serif">
 <text x="15" y="382.7" font-size="6" fill="#7a7a7a" textLength="30" lengthAdjust="spacingAndGlyphs">COMMENTS</text>
 <circle cx="149.6" cy="380.6" r="2.7" fill="#111"/>
 <rect x="148" y="380.1" width="3.2" height="1" fill="#fff"/>
 <path d="M155.8,378 Q157.4,380.5 155.8,383" stroke="#aaa" stroke-width="1" fill="none"/>
</svg>

<!-- nav toolbar -->
<div class="a" style="left:333.8px;top:375px;width:131.5px;height:12.8px;background:#f0f0f0"></div>
<svg class="a" style="left:330px;top:372px" width="140" height="18" viewBox="330 372 140 18">
 <!-- orbit -->
 <ellipse cx="339.4" cy="381.8" rx="4.3" ry="1.8" fill="none" stroke="#555" stroke-width="0.9"/>
 <path d="M339.4,376.8 V386.6" stroke="#555" stroke-width="1"/>
 <path d="M337.6,378.2 L339.4,376.2 L341.2,378.2 Z" fill="#555"/>
 <circle cx="337.2" cy="383.4" r="0.8" fill="#111"/>
 <path d="M346.5,381 H349 L347.75,382.6 Z" fill="#222"/>
 <!-- look at -->
 <path d="M352.2,379.5 L354,377.4 H359.8 L361.6,379.5 V385 H352.2 Z" fill="#c8c8c8" stroke="#777" stroke-width="0.7"/>
 <rect x="354.5" y="380.4" width="4.8" height="2.6" fill="#888"/>
 <!-- pan hand -->
 <path d="M367,381.5 V378.6 Q367,377.4 368,377.6 L368.4,380 V377 Q368.6,376.2 369.5,376.4 L369.9,379.5 V376.8 Q370.4,376 371.2,376.6 L371.4,379.8 V377.6 Q372.2,377 372.8,377.8 V382.6 Q372.6,386 369.8,386.2 Q367.6,386 367,383.6 Z" fill="#f4f4f4" stroke="#555" stroke-width="0.7"/>
 <!-- zoom -->
 <circle cx="382.6" cy="380.8" r="2.7" fill="none" stroke="#555" stroke-width="0.9"/>
 <path d="M384.6,382.8 L387.2,385.4" stroke="#333" stroke-width="1.2"/>
 <path d="M386.6,376.6 V379 M385.4,377.8 H387.8" stroke="#333" stroke-width="0.6"/>
 <!-- zoom window -->
 <circle cx="396.8" cy="380.8" r="3.2" fill="#eef6f8" stroke="#555" stroke-width="0.9"/>
 <path d="M399.2,383.2 L401.8,385.8" stroke="#222" stroke-width="1.3"/>
 <path d="M404.6,381 H407.1 L405.85,382.6 Z" fill="#222"/>
 <!-- display -->
 <rect x="414.2" y="377.4" width="8.8" height="6.6" rx="0.8" fill="#7fa6d8" stroke="#777" stroke-width="0.8"/>
 <path d="M417.2,384.2 H420 V385.4 H417.2 Z" fill="#888"/>
 <path d="M424.3,381 H426.8 L425.55,382.6 Z" fill="#222"/>
 <!-- visual style -->
 <rect x="430.9" y="377.3" width="7.9" height="8.2" fill="#9a9a9a" stroke="#888" stroke-width="0.5"/>
 <path d="M440.5,381 H443 L441.75,382.6 Z" fill="#222"/>
 <!-- grid -->
 <rect x="447" y="377.6" width="8" height="7.4" rx="0.8" fill="#5a80c8"/>
 <path d="M451,377.6 V385 M447,381.3 H455" stroke="#cfdcf0" stroke-width="0.8"/>
 <path d="M456.5,381 H459 L457.75,382.6 Z" fill="#222"/>
</svg>

<!-- timeline -->
<div class="a" style="left:0;top:389.6px;width:800px;height:24.4px;background:#f1f1f1;border-top:1.2px solid #cdcdcd"></div>
<svg class="a" style="left:0;top:370px" width="800" height="44" viewBox="0 370 800 44" font-family="Liberation Sans, sans-serif">
 <text x="727.1" y="383.8" font-size="6.3" font-weight="bold" fill="#222" textLength="54.9" lengthAdjust="spacingAndGlyphs">Multiple selections</text>
 <g fill="#444">
  <rect x="5.6" y="400" width="1.1" height="6.8"/>
  <path d="M6.9,403.4 L11.9,400 V406.8 Z"/>
  <path d="M18.7,403.4 L23,400.2 V406.6 Z"/><rect x="23.6" y="402.4" width="1.4" height="2"/>
  <path d="M31.9,399.4 L37.5,403.4 L31.9,407.4 Z"/>
  <rect x="43.8" y="402.4" width="1.4" height="2"/><path d="M45.8,400.2 L50.4,403.4 L45.8,406.6 Z"/>
  <path d="M57.5,400 L62.6,403.4 L57.5,406.8 Z"/><rect x="63" y="400" width="1.1" height="6.8"/>
 </g>
 <rect x="74.4" y="396.1" width="11.9" height="12.5" fill="#0a8ad6"/>
 <circle cx="79.6" cy="402.3" r="3.6" fill="none" stroke="#0a6aa8" stroke-width="1"/>
 <path d="M80.5,404.8 L83.4,401.6" stroke="#f0d040" stroke-width="1.1"/>
 <path d="M83.4,395.5 H89.8 L87.2,398.2 V412 H86 V398.2 Z" fill="#555"/>
 <g transform="translate(788.6,402.6)" fill="none" stroke="#666">
  <circle r="2.6" stroke-width="1.4"/>
  <path d="M0,-4.4 V4.4 M-4.4,0 H4.4 M-3.1,-3.1 L3.1,3.1 M-3.1,3.1 L3.1,-3.1" stroke-width="1.1"/>
 </g>
 <circle cx="788.6" cy="402.6" r="1.2" fill="#f0f0f0"/>
</svg>

</div></body></html>
